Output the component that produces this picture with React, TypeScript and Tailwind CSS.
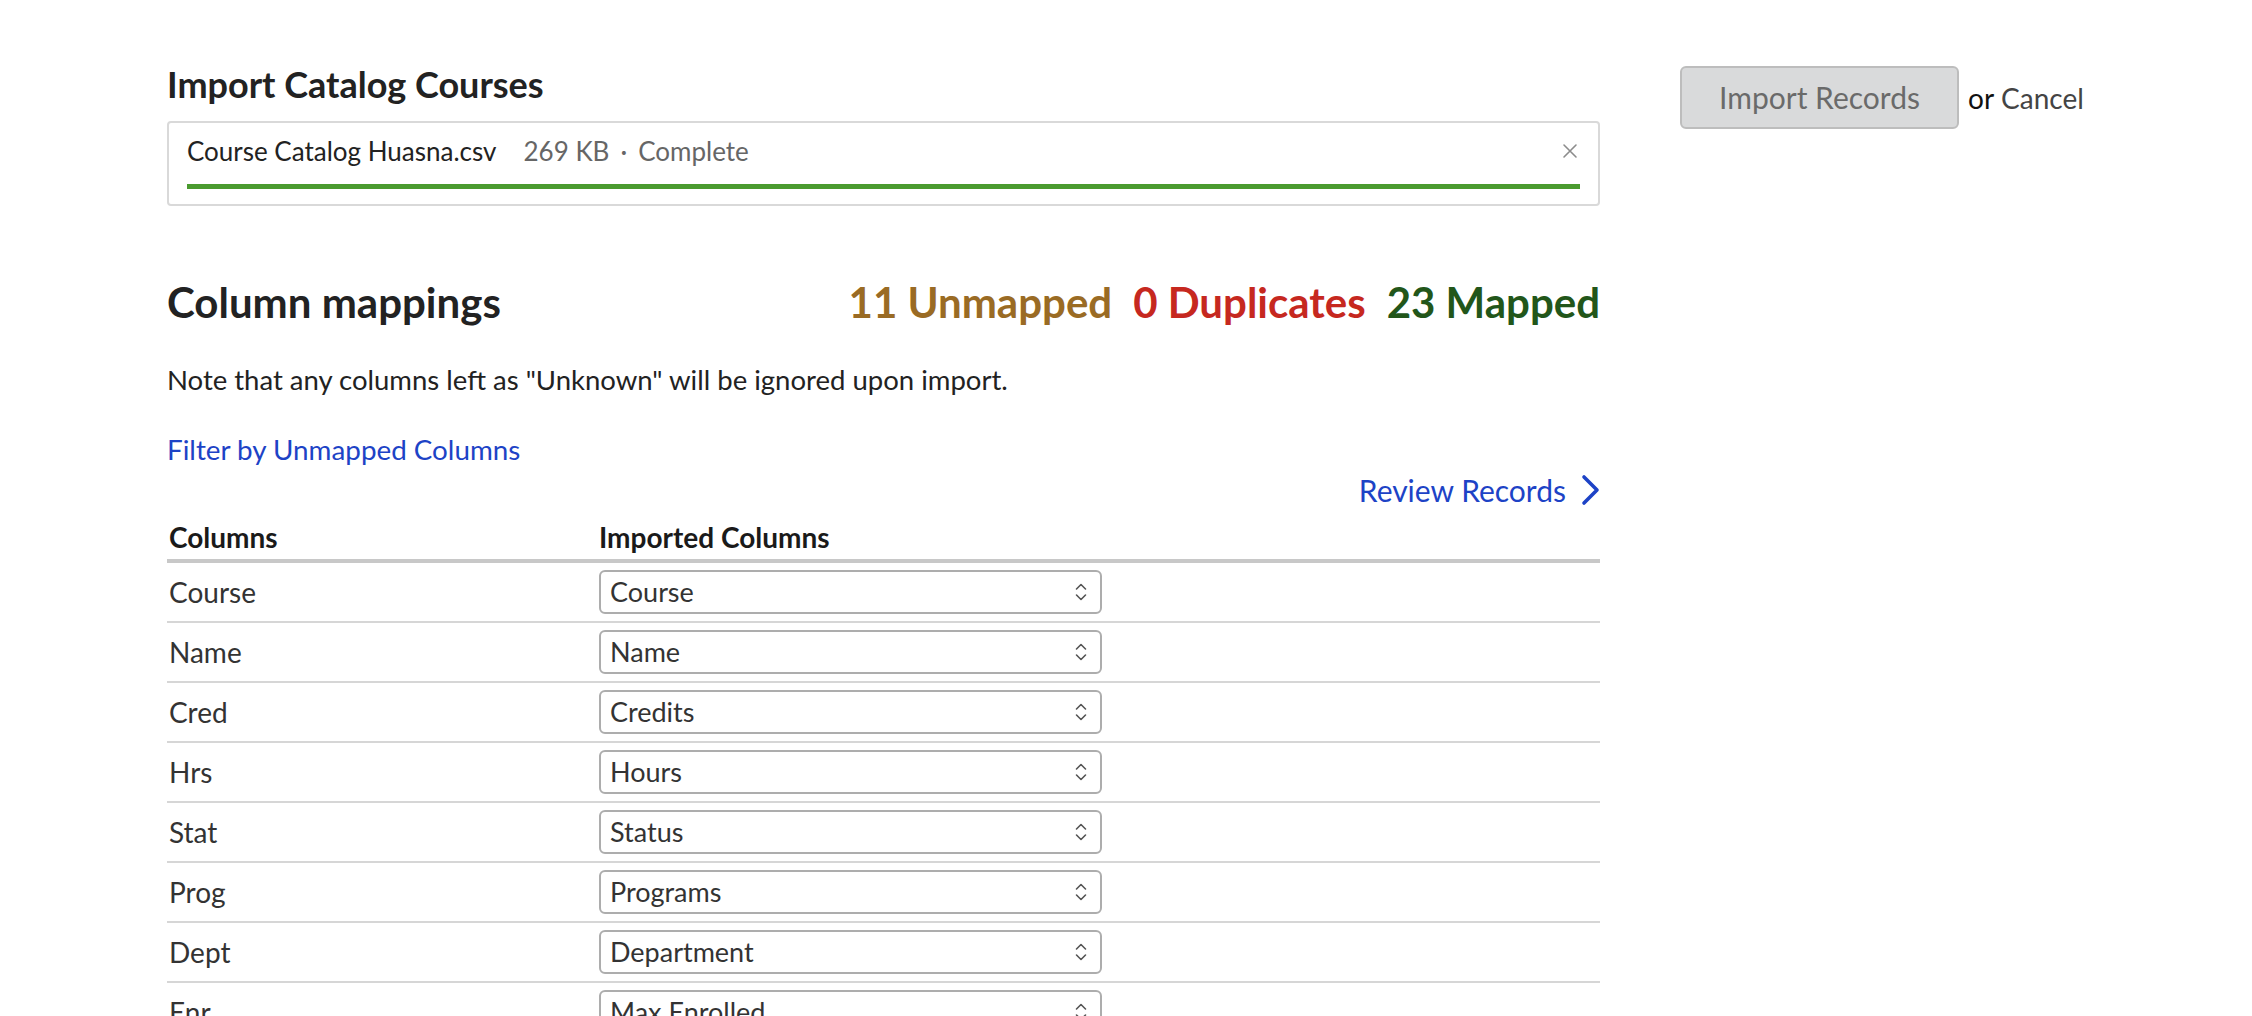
import React from "react"

const rows: [string, string][] = [
  ["Course", "Course"],
  ["Name", "Name"],
  ["Cred", "Credits"],
  ["Hrs", "Hours"],
  ["Stat", "Status"],
  ["Prog", "Programs"],
  ["Dept", "Department"],
  ["Enr", "Max Enrolled"],
  ["Sec", "Sections"],
]

function UpDown() {
  return (
    <svg width="14" height="26" viewBox="0 0 14 26" fill="none" stroke="#555" strokeWidth="1.6" strokeLinecap="round" strokeLinejoin="round">
      <path d="M2.5 10 L7 5.5 L11.5 10" />
      <path d="M2.5 16 L7 20.5 L11.5 16" />
    </svg>
  )
}

export default function App() {
  return (
    <div className="h-[1016px] w-full overflow-hidden bg-white font-['Lato','Noto_Sans',sans-serif] text-[#222]">
      <div className="flex gap-[80px] pl-[167px] pt-[64px]">
        {/* main column */}
        <div className="w-[1433px] shrink-0">
          <h1 className="text-[36px] font-bold leading-[40px] text-[#222]">Import Catalog Courses</h1>

          <div className="mt-[17px] rounded-[4px] border-2 border-[#d9d9d9] px-[18px] pt-[13px] pb-[15px]">
            <div className="flex items-center text-[26px] leading-[30px]">
              <span className="text-[#222]">Course Catalog Huasna.csv</span>
              <span className="ml-[27px] text-[#666]">269 KB</span>
              <span className="mx-[11px] text-[#666]">·</span>
              <span className="text-[#666]">Complete</span>
              <span className="ml-auto mr-[2px] flex items-center">
                <svg width="16" height="16" viewBox="0 0 16 16" stroke="#8c8c8c" strokeWidth="1.6" strokeLinecap="round">
                  <path d="M2 2 L14 14 M14 2 L2 14" />
                </svg>
              </span>
            </div>
            <div className="mt-[18px] h-[5px] bg-[#4a9b2f]" />
          </div>

          <div className="mt-[72px] flex items-center justify-between">
            <h2 className="text-[42px] font-bold leading-[48px] text-[#222]">Column mappings</h2>
            <div className="flex gap-[21px] text-[42px] font-bold leading-[48px]">
              <span className="text-[#9a6b24]">11 Unmapped</span>
              <span className="text-[#c6281f]">0 Duplicates</span>
              <span className="text-[#22561a]">23 Mapped</span>
            </div>
          </div>

          <p className="mt-[37px] text-[27.5px] leading-[34px] text-[#222]">
            Note that any columns left as "Unknown" will be ignored upon import.
          </p>

          <a className="mt-[36px] block text-[27.8px] leading-[34px] text-[#1d43c6]">Filter by Unmapped Columns</a>

          <div className="mt-[6px] flex justify-end">
            <a className="flex items-center gap-[15px] text-[30px] leading-[34px] text-[#1d43c6]">
              Review Records
              <svg width="19" height="32" viewBox="0 0 19 32" fill="none" stroke="#1d43c6" strokeWidth="3.6" strokeLinecap="round" strokeLinejoin="round">
                <path d="M3 3 L16 16 L3 29" />
              </svg>
            </a>
          </div>

          <div className="mt-[13px] flex border-b-4 border-[#c8c8c8] pb-[5px] text-[28px] font-bold leading-[34px] text-[#1a1a1a]">
            <div className="w-[432px] pl-[2px]">Columns</div>
            <div>Imported Columns</div>
          </div>

          {rows.map(([col, imported]) => (
            <div key={col} className="flex h-[60px] items-center border-b-2 border-[#d6d6d6] text-[28px] text-[#333]">
              <div className="w-[432px] pl-[2px]">{col}</div>
              <div className="flex h-[44px] w-[503px] items-center justify-between rounded-[6px] border-2 border-[#adadad] pl-[9px] pr-[12px] text-[27px]">
                <span>{imported}</span>
                <UpDown />
              </div>
            </div>
          ))}
        </div>

        {/* actions */}
        <div className="mt-[2px] flex h-[63px] items-center">
          <button className="h-[63px] w-[279px] rounded-[6px] border-2 border-[#bdbdbd] bg-[#d9dadb] text-[30px] text-[#6a6a6a]">
            Import Records
          </button>
          <span className="ml-[9px] text-[28px] text-[#111]">or</span>
          <span className="ml-[7px] text-[28px] text-[#444]">Cancel</span>
        </div>
      </div>
    </div>
  )
}
